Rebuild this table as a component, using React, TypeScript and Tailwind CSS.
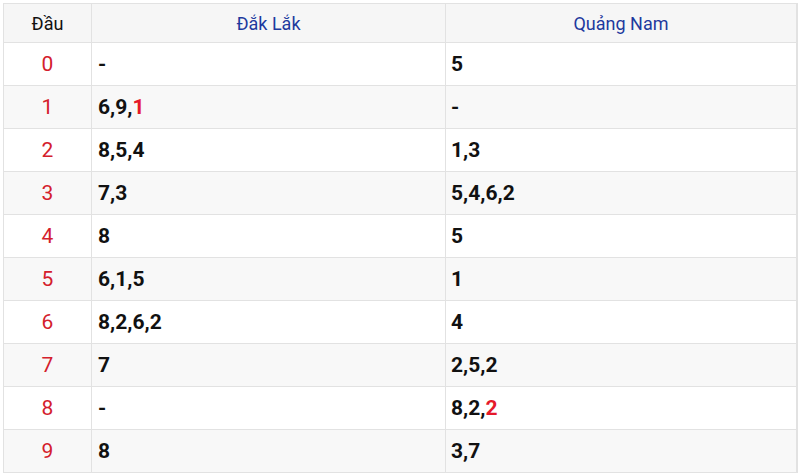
const rows: { d: string; a: string[]; b: string[]; aHi?: number; bHi?: number }[] = [
  { d: '0', a: ['-'], b: ['5'] },
  { d: '1', a: ['6', '9', '1'], b: ['-'], aHi: 2 },
  { d: '2', a: ['8', '5', '4'], b: ['1', '3'] },
  { d: '3', a: ['7', '3'], b: ['5', '4', '6', '2'] },
  { d: '4', a: ['8'], b: ['5'] },
  { d: '5', a: ['6', '1', '5'], b: ['1'] },
  { d: '6', a: ['8', '2', '6', '2'], b: ['4'] },
  { d: '7', a: ['7'], b: ['2', '5', '2'] },
  { d: '8', a: ['-'], b: ['8', '2', '2'], bHi: 2 },
  { d: '9', a: ['8'], b: ['3', '7'] },
]

function Nums({ items, hi }: { items: string[]; hi?: number }) {
  return (
    <span>
      {items.map((n, i) => (
        <span key={i}>
          <span className={i === hi ? 'text-[#e5192a]' : ''}>{n}</span>
          {i < items.length - 1 ? ',' : ''}
        </span>
      ))}
    </span>
  )
}

export default function App() {
  return (
    <div className="w-[800px] h-[473px] overflow-hidden bg-white pt-[3px] pl-[3px] pr-[2px]" style={{ fontFamily: 'Roboto, sans-serif' }}>
      <div className="border-l border-t border-r-[2px] border-[#e2e2e2]">
        {/* Header */}
        <div className="grid grid-cols-[87px_354px_1fr] h-[39px] bg-[#f6f6f6] border-b border-[#e2e2e2] text-[18px]">
          <div className="flex items-center justify-center text-[#111]">Đầu</div>
          <div className="flex items-center justify-center text-[#1e3a9e] border-l border-[#e2e2e2]">Đắk Lắk</div>
          <div className="flex items-center justify-center text-[#1e3a9e] border-l border-[#e2e2e2]">Quảng Nam</div>
        </div>

        {rows.map((r, i) => (
          <div
            key={r.d}
            className={`grid grid-cols-[87px_354px_1fr] h-[43px] border-b border-[#e2e2e2] ${i % 2 === 1 ? 'bg-[#f8f8f8]' : 'bg-white'}`}
          >
            <div className="flex items-center justify-center pt-[2px] text-[21px] text-[#d4202c]">{r.d}</div>
            <div className="flex items-center pl-[6px] pt-[2px] text-[21px] font-bold text-[#111] border-l border-[#e2e2e2]">
              <Nums items={r.a} hi={r.aHi} />
            </div>
            <div className="flex items-center pl-[5px] pt-[2px] text-[21px] font-bold text-[#111] border-l border-[#e2e2e2]">
              <Nums items={r.b} hi={r.bHi} />
            </div>
          </div>
        ))}
      </div>
    </div>
  )
}
